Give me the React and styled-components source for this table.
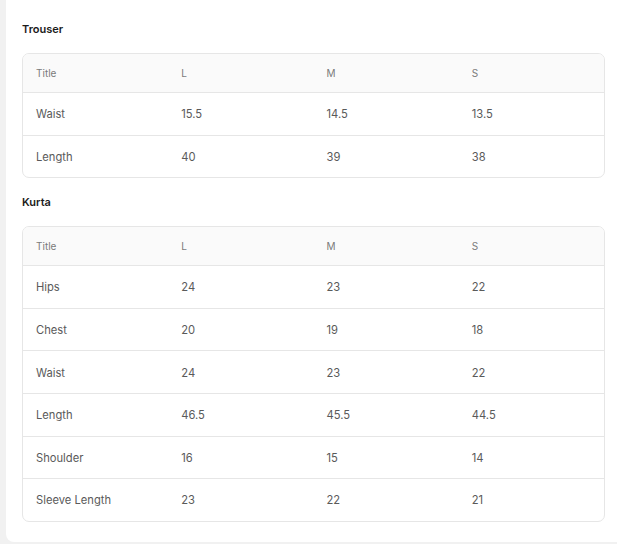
import styled, { createGlobalStyle } from 'styled-components'

const GlobalStyle = createGlobalStyle`
body{
margin:0;
background:#f1f1f1;
font-family:Inter, "Noto Sans", sans-serif;
}
`

const sizeCharts = [
  {
    name: 'Trouser',
    rows: [
      ['Waist', '15.5', '14.5', '13.5'],
      ['Length', '40', '39', '38'],
    ],
  },
  {
    name: 'Kurta',
    rows: [
      ['Hips', '24', '23', '22'],
      ['Chest', '20', '19', '18'],
      ['Waist', '24', '23', '22'],
      ['Length', '46.5', '45.5', '44.5'],
      ['Shoulder', '16', '15', '14'],
      ['Sleeve Length', '23', '22', '21'],
    ],
  },
]

const headers = ['Title', 'L', 'M', 'S']

function App(){
return(
<>
<GlobalStyle/>
<Panel>
{sizeCharts.map(chart=>(
<Section key={chart.name}>
<Heading>{chart.name}</Heading>
<Table>
<HeadRow>
{headers.map(h=><HeadCell key={h}>{h}</HeadCell>)}
</HeadRow>
{chart.rows.map((row,i)=>(
<Row key={i}>
{row.map((cell,j)=><Cell key={j}>{cell}</Cell>)}
</Row>
))}
</Table>
</Section>
))}
</Panel>
</>
)
}
export default App

const Panel=styled.div`
margin-left:6px;
height:542px;
box-sizing:border-box;
background:#fff;
border-bottom-left-radius:8px;
padding:22px 12px 20px 16px;
display:flex;
flex-direction:column;
gap:17px;
`
const Section=styled.div`
display:flex;
flex-direction:column;
gap:17px;
`
const Heading=styled.p`
margin:0;
font-size:11px;
line-height:14px;
font-weight:600;
color:#1b1b1b;
`
const Table=styled.div`
border:1px solid #e6e6e6;
border-radius:7px;
overflow:hidden;
`
const HeadRow=styled.div`
display:grid;
grid-template-columns:repeat(4,1fr);
height:38px;
align-items:center;
background:#fafafa;
border-bottom:1px solid #e6e6e6;
`
const Row=styled.div`
display:grid;
grid-template-columns:repeat(4,1fr);
height:41.6px;
align-items:center;
border-bottom:1px solid #e6e6e6;
&:last-child{
border-bottom:none;
}
`
const HeadCell=styled.div`
padding-left:13px;
font-size:10px;
color:#7a7a7a;
`
const Cell=styled.div`
padding-left:13px;
padding-top:1px;
font-size:11.2px;
color:#5a5a5a;
`
